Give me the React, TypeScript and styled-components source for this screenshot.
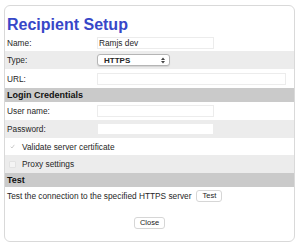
import React from 'react';
import styled, {createGlobalStyle} from 'styled-components';

const Global = createGlobalStyle`
  body {
    margin: 0;
    background: #fff;
    font-family: "Liberation Sans", Arial, sans-serif;
    color: #262626;
  }
`;

const Panel = styled.div`
  margin: 5px 0 0 4px;
  width: 291px;
  height: 237px;
  border: 1px solid #d9d9d9;
  border-radius: 6px;
  box-sizing: border-box;
  display: flex;
  flex-direction: column;
`;

const Title = styled.h1`
  margin: 0;
  padding: 9px 0 0 2px;
  height: 19px;
  font-size: 16px;
  font-weight: bold;
  color: #3747c8;
  line-height: 19px;
`;

const Row = styled.div<{ $shaded?: boolean; $h?: number }>`
  display: grid;
  grid-template-columns: 90px 1fr;
  align-items: center;
  height: ${p => p.$h || 18}px;
  padding: 0 8px 0 2px;
  background: ${p => (p.$shaded ? '#ececec' : '#fff')};
  font-size: 8.3px;
`;

const Section = styled.div<{ $h?: number }>`
  height: ${p => p.$h || 14}px;
  display: flex;
  align-items: center;
  padding-left: 2px;
  background: #cacaca;
  font-size: 9px;
  font-weight: bold;
  color: #111;
`;

const Input = styled.div<{ $w?: number }>`
  width: ${p => (p.$w ? `${p.$w}px` : 'auto')};
  height: 10px;
  border: 1px solid #ececec;
  background: #fff;
  font-size: 8.3px;
  line-height: 10px;
  padding-left: 1px;
`;

const Select = styled.div`
  width: 61px;
  height: 10px;
  border: 1px solid #b5b5b5;
  border-radius: 3px;
  background: #fff;
  display: flex;
  align-items: center;
  justify-content: space-between;
  padding: 0 4px 0 6px;
  font-size: 8px;
  font-weight: bold;
  box-shadow: 0 1px 1px rgba(0, 0, 0, 0.1);
`;

const CheckRow = styled.div<{ $shaded?: boolean; $h?: number }>`
  display: flex;
  align-items: center;
  gap: 6px;
  height: ${p => p.$h || 18}px;
  padding-left: 4px;
  background: ${p => (p.$shaded ? '#ececec' : '#fff')};
  font-size: 8.3px;
`;

const Box = styled.span<{ $checked?: boolean }>`
  width: 7px;
  height: 7px;
  box-sizing: border-box;
  display: flex;
  align-items: center;
  justify-content: center;
  overflow: hidden;
  border: 1px solid ${p => (p.$checked ? 'transparent' : '#e2e2e2')};
  background: ${p => (p.$checked ? 'transparent' : '#f4f4f4')};
  border-radius: 1px;
`;

const TextRow = styled.div`
  display: flex;
  align-items: center;
  gap: 5px;
  height: 18px;
  padding-left: 2px;
  font-size: 8.3px;
`;

const Button = styled.button`
  font-family: inherit;
  font-size: 7.5px;
  height: 12px;
  padding: 0 5px;
  border: 1px solid #d6d6d6;
  border-radius: 3px;
  background: #fff;
  color: #222;
  line-height: 10px;
`;

const Footer = styled.div`
  flex: 1;
  display: flex;
  justify-content: center;
  padding-top: 12px;
`;

export default function App() {
  return (
    <>
      <Global/>
      <Panel>
        <Title>Recipient Setup</Title>
        <Row $h={17}>
          <span>Name:</span>
          <Input $w={114}>Ramjs dev</Input>
        </Row>
        <Row $shaded $h={18}>
          <span>Type:</span>
          <Select>
            <span>HTTPS</span>
            <svg width="4" height="7" viewBox="0 0 4 7">
              <path d="M0 3 L2 0.5 L4 3 Z M0 4 L2 6.5 L4 4 Z" fill="#444"/>
            </svg>
          </Select>
        </Row>
        <Row $h={19}>
          <span>URL:</span>
          <Input/>
        </Row>
        <Section>Login Credentials</Section>
        <Row $h={18}>
          <span>User name:</span>
          <Input $w={114}/>
        </Row>
        <Row $shaded $h={18}>
          <span>Password:</span>
          <Input $w={114}/>
        </Row>
        <CheckRow $h={17}>
          <Box $checked>
            <svg width="7" height="7" viewBox="0 0 7 7">
              <path d="M1 3.8 L2.8 5.6 L6 1.2" fill="none" stroke="#b8b8b8" strokeWidth="1"/>
            </svg>
          </Box>
          <span>Validate server certificate</span>
        </CheckRow>
        <CheckRow $shaded $h={18}>
          <Box/>
          <span>Proxy settings</span>
        </CheckRow>
        <Section>Test</Section>
        <TextRow>
          <span>Test the connection to the specified HTTPS server</span>
          <Button>Test</Button>
        </TextRow>
        <Footer>
          <Button>Close</Button>
        </Footer>
      </Panel>
    </>
  );
}
